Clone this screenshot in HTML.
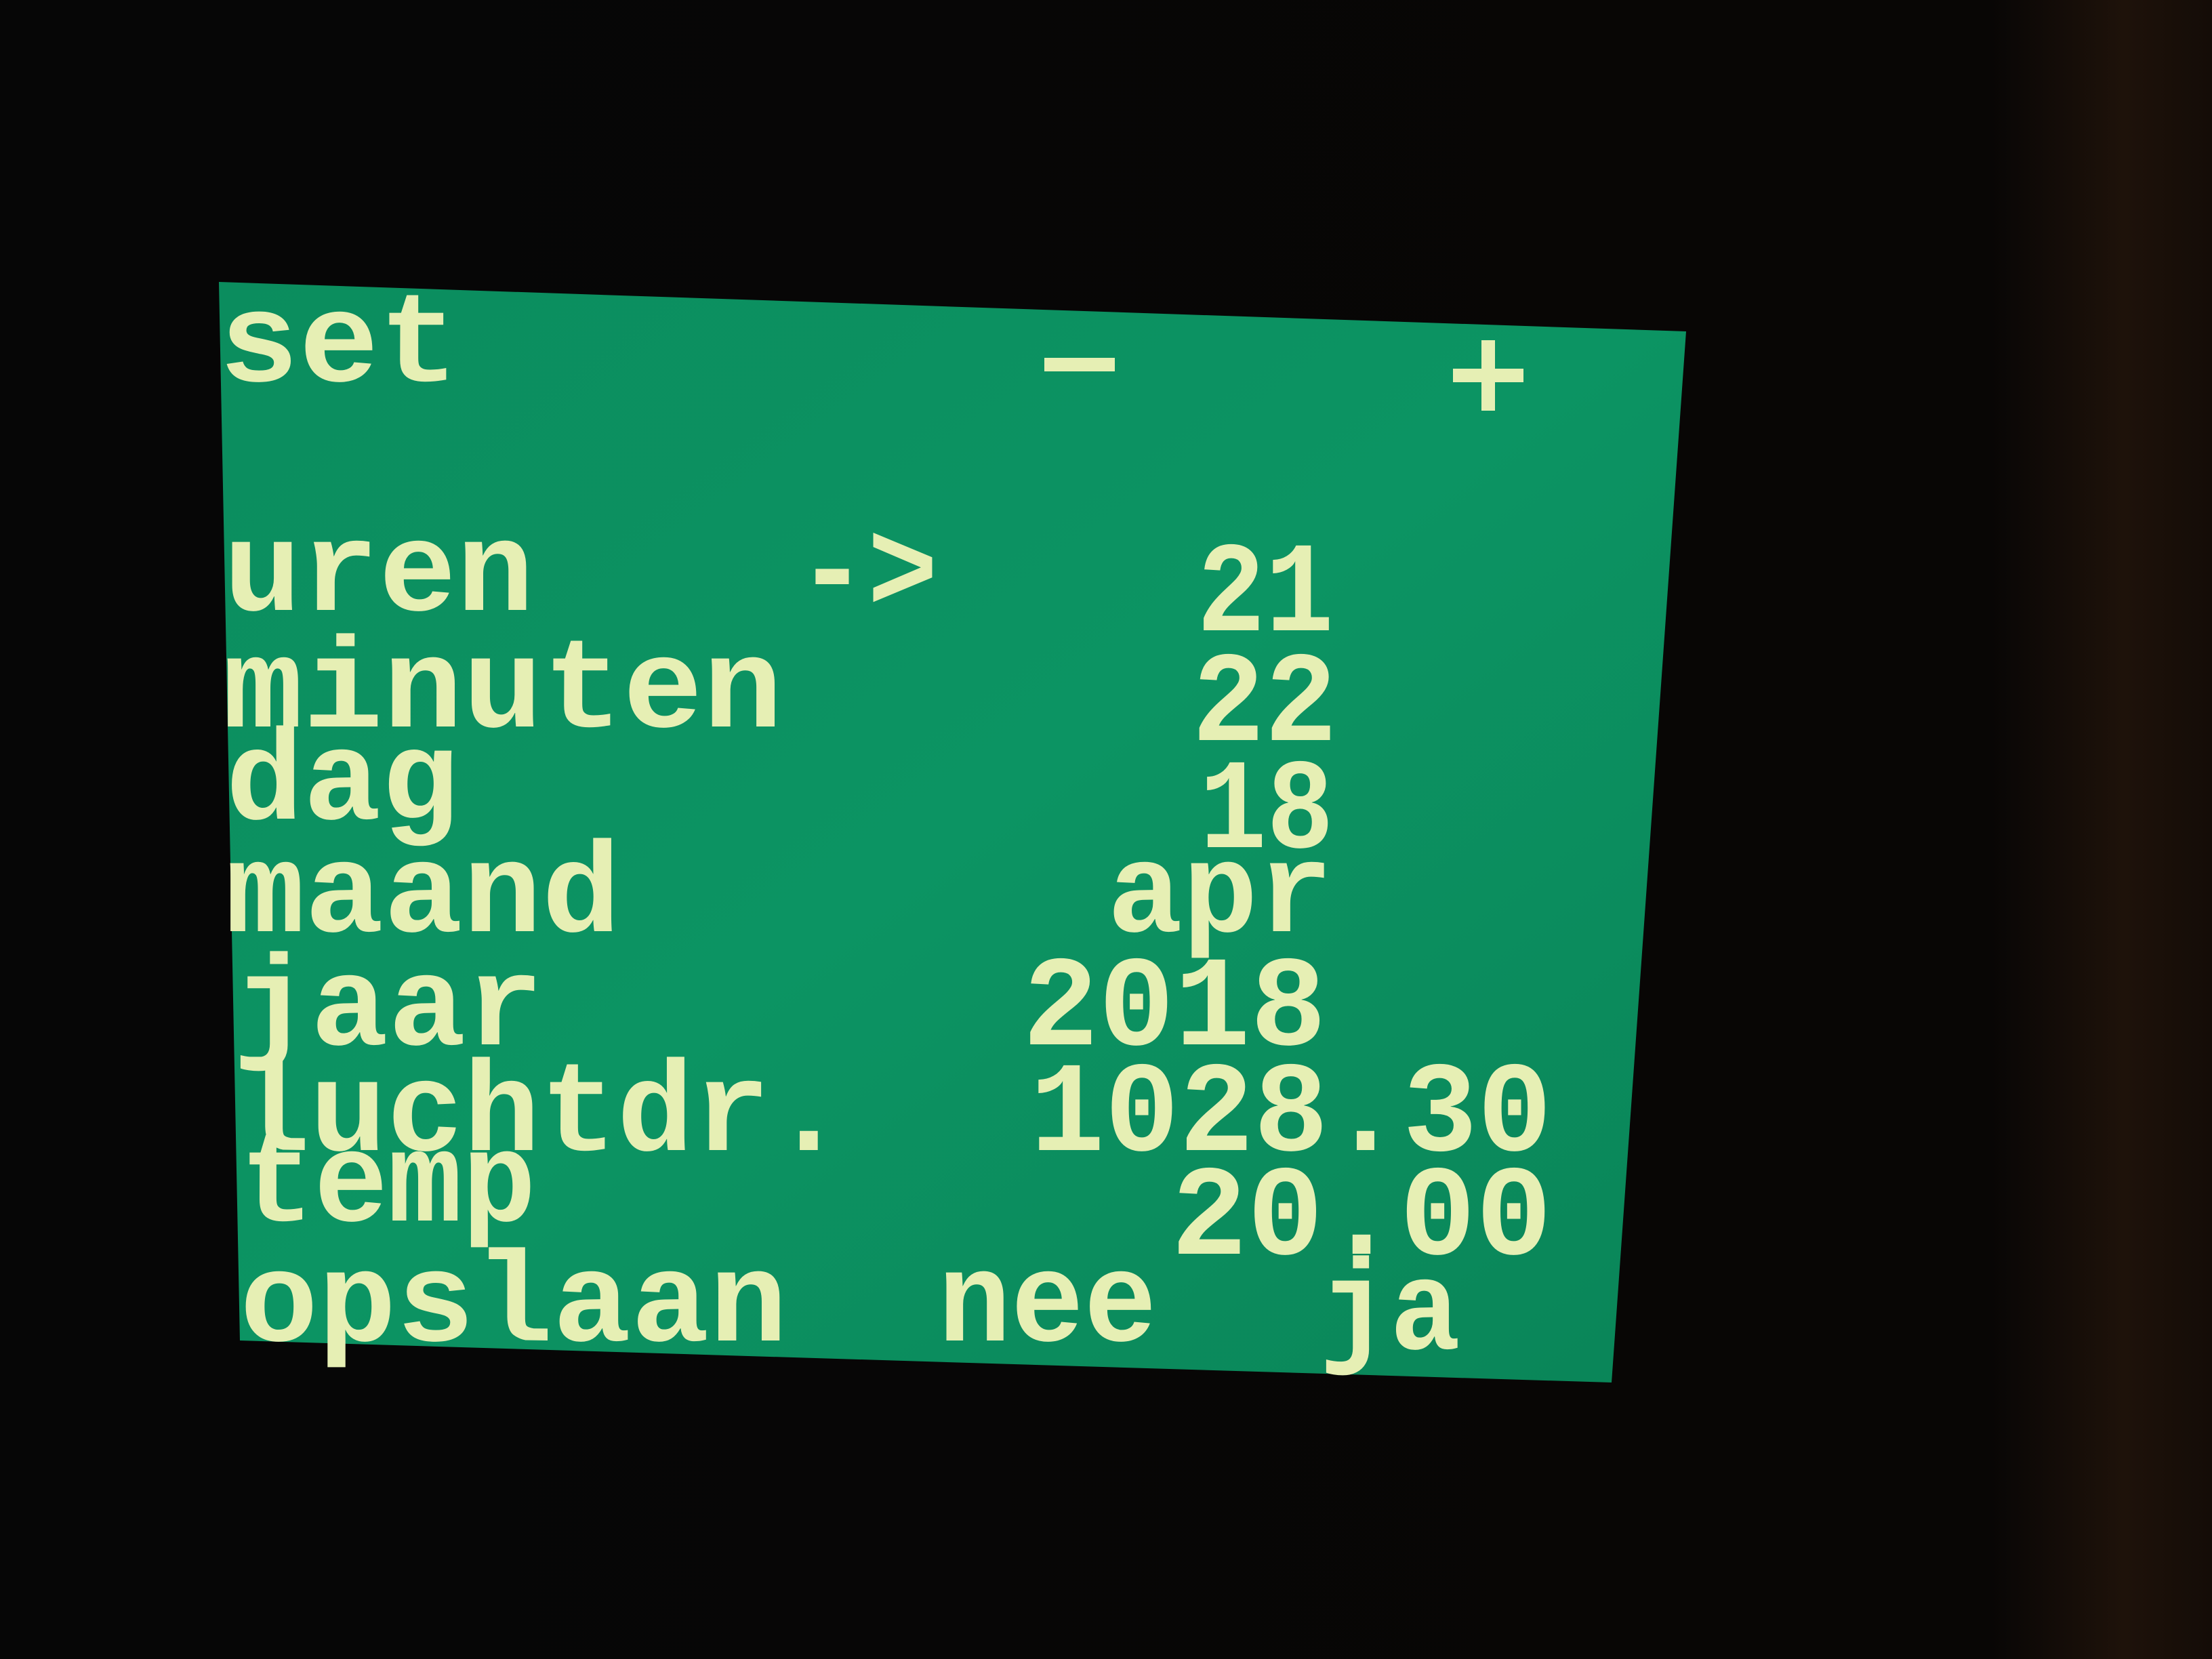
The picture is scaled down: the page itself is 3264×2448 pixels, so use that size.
<!DOCTYPE html>
<html><head><meta charset="utf-8"><style>
html,body{margin:0;padding:0;background:#050505;}
svg{display:block}
text{font-family:"Liberation Mono","DejaVu Sans Mono",monospace;font-weight:bold;font-size:190px;fill:#e6efb4;}
</style></head><body>
<svg width="3264" height="2448" viewBox="0 0 3264 2448" xmlns="http://www.w3.org/2000/svg">
<defs>
<linearGradient id="bg" x1="0" x2="1" y1="0" y2="0">
<stop offset="0" stop-color="#060606"/><stop offset="0.9" stop-color="#080605"/><stop offset="0.96" stop-color="#1e120a"/><stop offset="1" stop-color="#140c07"/>
</linearGradient>
<linearGradient id="scr" x1="0" x2="1" y1="0" y2="1">
<stop offset="0" stop-color="#0b8d5e"/><stop offset="0.5" stop-color="#0c9463"/><stop offset="1" stop-color="#0a8558"/>
</linearGradient>
</defs>
<rect width="3264" height="2448" fill="url(#bg)"/>
<polygon points="323,416 2488,489 2378,2040 354,1978" fill="url(#scr)"/>
<text x="323" y="562" textLength="354" lengthAdjust="spacingAndGlyphs">set</text>
<rect x="1541" y="528" width="104" height="20" fill="#e6efb4"/>
<rect x="2144" y="544" width="104" height="20" fill="#e6efb4"/>
<rect x="2186" y="502" width="20" height="104" fill="#e6efb4"/>
<text x="330" y="900" textLength="458" lengthAdjust="spacingAndGlyphs">uren</text>
<text x="1176" y="900" textLength="208" lengthAdjust="spacingAndGlyphs">-&gt;</text>
<text x="1766" y="930" textLength="202" lengthAdjust="spacingAndGlyphs">21</text>
<text x="329" y="1072" textLength="826" lengthAdjust="spacingAndGlyphs">minuten</text>
<text x="1759" y="1092" textLength="214" lengthAdjust="spacingAndGlyphs">22</text>
<text x="333" y="1208" textLength="344" lengthAdjust="spacingAndGlyphs">dag</text>
<text x="1770" y="1250" textLength="198" lengthAdjust="spacingAndGlyphs">18</text>
<text x="333" y="1374" textLength="583" lengthAdjust="spacingAndGlyphs">maand</text>
<text x="1634" y="1374" textLength="333" lengthAdjust="spacingAndGlyphs">apr</text>
<text x="344" y="1541" textLength="458" lengthAdjust="spacingAndGlyphs">jaar</text>
<text x="1509" y="1541" textLength="448" lengthAdjust="spacingAndGlyphs">2018</text>
<text x="344" y="1697" textLength="906" lengthAdjust="spacingAndGlyphs">luchtdr.</text>
<text x="1520" y="1697" textLength="770" lengthAdjust="spacingAndGlyphs">1028.30</text>
<text x="354" y="1801" textLength="437" lengthAdjust="spacingAndGlyphs">temp</text>
<text x="1728" y="1850" textLength="562" lengthAdjust="spacingAndGlyphs">20.00</text>
<text x="354" y="1978" textLength="808" lengthAdjust="spacingAndGlyphs">opslaan</text>
<text x="1384" y="1978" textLength="323" lengthAdjust="spacingAndGlyphs">nee</text>
<text x="1947" y="1990" textLength="208" lengthAdjust="spacingAndGlyphs">ja</text>
</svg>
</body></html>
